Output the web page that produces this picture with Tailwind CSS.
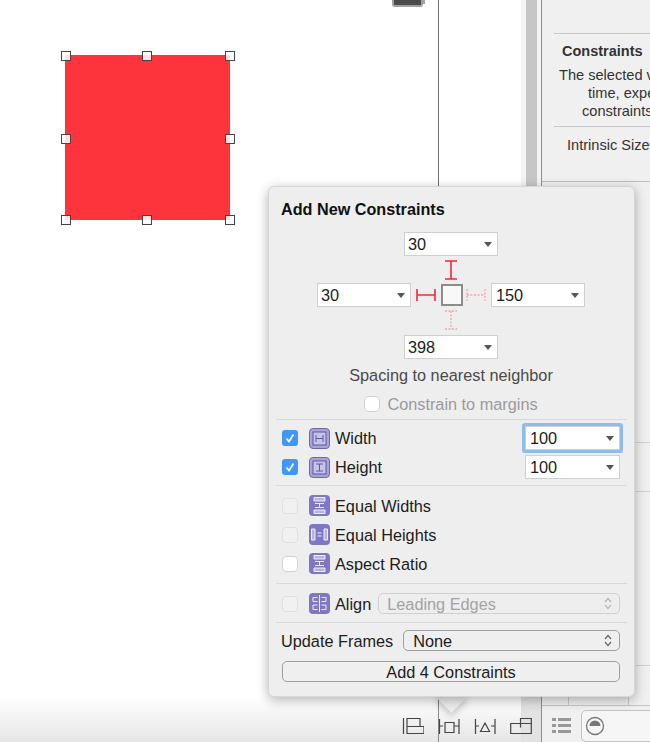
<!DOCTYPE html>
<html lang="en">
<head>
<meta charset="UTF-8">
<title>Add New Constraints</title>
<script src="https://cdn.jsdelivr.net/npm/@tailwindcss/browser@4"></script>
</head>
<body class="bg-white font-['Liberation_Sans',Arial,sans-serif] antialiased">
<div class="relative w-[650px] h-[742px] overflow-hidden bg-white">

  <!-- canvas: selected view -->
  <div class="absolute left-[65px] top-[55px] w-[165px] h-[165px] bg-[#fd343c]"></div>
  <div class="absolute left-[61px] top-[51px] w-[10px] h-[10px] bg-white/85 border-[1.5px] border-[#444]"></div>
  <div class="absolute left-[142px] top-[51px] w-[10px] h-[10px] bg-white/85 border-[1.5px] border-[#444]"></div>
  <div class="absolute left-[225px] top-[51px] w-[10px] h-[10px] bg-white/85 border-[1.5px] border-[#444]"></div>
  <div class="absolute left-[61px] top-[134px] w-[10px] h-[10px] bg-white/85 border-[1.5px] border-[#444]"></div>
  <div class="absolute left-[225px] top-[134px] w-[10px] h-[10px] bg-white/85 border-[1.5px] border-[#444]"></div>
  <div class="absolute left-[61px] top-[215px] w-[10px] h-[10px] bg-white/85 border-[1.5px] border-[#444]"></div>
  <div class="absolute left-[142px] top-[215px] w-[10px] h-[10px] bg-white/85 border-[1.5px] border-[#444]"></div>
  <div class="absolute left-[225px] top-[215px] w-[10px] h-[10px] bg-white/85 border-[1.5px] border-[#444]"></div>

  <!-- scene dock edge, battery glyph, scroller -->
  <div class="absolute left-[392px] top-0 w-[31px] h-[7px] bg-[#4a4a4a] border-2 border-t-0 border-[#a0a0a0] rounded-b-[3px]"></div>
  <div class="absolute left-[423px] top-0 w-[2px] h-[4px] bg-[#a0a0a0]"></div>
  <div class="absolute left-[438px] top-0 w-px h-[742px] bg-[#6f6f6f]"></div>
  <div class="absolute left-[521px] top-0 w-[20px] h-[742px] bg-[#f4f4f4]"></div>
  <div class="absolute left-[526px] top-0 w-[11px] h-[742px] bg-[#c6c6c6]"></div>

  <!-- inspector -->
  <div class="absolute left-[541px] top-0 w-[109px] h-[742px] bg-[#f0f0f0] border-l border-[#8e8e8e] text-[#333]">
    <div class="absolute left-[12px] top-[33px] w-[97px] h-px bg-[#c9c9c9]"></div>
    <div class="absolute left-[20px] top-[43px] text-[14.5px] leading-[17px] font-bold whitespace-nowrap">Constraints</div>
    <div class="absolute left-[17px] top-[66px] text-[14.6px] leading-[18px] whitespace-nowrap">The selected view</div>
    <div class="absolute left-[46px] top-[84px] text-[14.6px] leading-[18px] whitespace-nowrap">time, expected</div>
    <div class="absolute left-[40px] top-[102px] text-[14.6px] leading-[18px] whitespace-nowrap">constraints are</div>
    <div class="absolute left-[12px] top-[126px] w-[97px] h-px bg-[#c9c9c9]"></div>
    <div class="absolute left-[25px] top-[136px] text-[14.6px] leading-[18px] whitespace-nowrap">Intrinsic Size</div>
    <div class="absolute left-0 top-[181px] w-[109px] h-px bg-[#bdbdbd]"></div>
    <div class="absolute left-[94px] top-[442px] w-[15px] h-px bg-[#d0d0d0]"></div>
    <div class="absolute left-[94px] top-[491px] w-[15px] h-px bg-[#d0d0d0]"></div>
    <div class="absolute left-[94px] top-[665px] w-[15px] h-px bg-[#d0d0d0]"></div>
    <div class="absolute left-[26px] top-[695px] w-[61px] h-[10px] border-x border-[#c9c9c9]"></div>
    <div class="absolute left-0 top-[705px] w-[109px] h-px bg-[#c4c4c4]"></div>
  </div>

  <!-- bottom bar -->
  <div class="absolute left-0 top-[697px] w-[541px] h-[45px] bg-gradient-to-b from-[#ffffff] to-[#e6e6e6]"></div>
  <div class="absolute left-[438px] top-[697px] w-px h-[45px] bg-[#8a8a8a]"></div>
  <div class="absolute left-[521px] top-[697px] w-[20px] h-[45px] bg-[#e2e2e2]"></div>
  <div class="absolute left-[541px] top-[698px] w-px h-[44px] bg-[#8e8e8e]"></div>
  <div class="absolute left-[402px] top-[715px] flex gap-[14px] items-center">
    <svg width="22" height="20" viewBox="0 0 22 20" fill="none" stroke="#444" stroke-width="1.200"><path d="M1.500 3v16"/><path d="M5 3.500h13v8H5zM5 11.500h17v7H5z"/></svg>
    <svg width="22" height="20" viewBox="0 0 22 20" fill="none" stroke="#444" stroke-width="1.200"><path d="M1.500 4v15M1.500 11H5M7 7.500h9v10H7zM21 4v15M16 11h5"/></svg>
    <svg width="22" height="20" viewBox="0 0 22 20" fill="none" stroke="#444" stroke-width="1.200"><path d="M1.500 4v15M1.500 11H5M21 4v15M17 11h4M11 8l4.500 8.500H6.500z"/></svg>
    <svg width="22" height="20" viewBox="0 0 22 20" fill="none" stroke="#444" stroke-width="1.200"><path d="M.7 8.500h20.600v10H.7zM10.500 8.500V3.500h10.800v5M10.500 8.500v4"/></svg>
  </div>
  <svg class="absolute left-[552px] top-[717px]" width="19" height="18" viewBox="0 0 19 18" fill="#999"><path d="M0 1h4v3H0zM6 1h13v3H6zM0 7h4v3H0zM6 7h13v3H6zM0 13h4v3H0zM6 13h13v3H6z"/></svg>
  <div class="absolute left-[581px] top-[710px] w-[80px] h-[32px] bg-[#f6f6f6] border border-[#c2c2c2] rounded-[5px]"></div>
  <svg class="absolute left-[585px] top-[716px]" width="20" height="20" viewBox="0 0 20 20"><circle cx="10" cy="10" r="8.500" fill="none" stroke="#777" stroke-width="1.300"/><path d="M4.500 10a5.500 5.500 0 0 1 11 0z" fill="#777"/></svg>

  <!-- popover arrow -->
  <div class="absolute left-[440px] top-[685px] w-[23px] h-[23px] rotate-45 bg-[#eeeeee] shadow-[3px_3px_6px_rgba(0,0,0,0.18)]"></div>

  <!-- popover -->
  <div class="absolute left-[268px] top-[186px] w-[367px] h-[511px] bg-[#eeeeee] rounded-[6px] border border-[#d6d6d6] shadow-[0_3px_12px_rgba(0,0,0,0.3)] text-[#1c1c1c] text-[16.3px] leading-[18px]">
    <div class="pl-[12px] pt-[13px] font-bold text-[#111] text-[16.2px]">Add New Constraints</div>

    <!-- spacing cross -->
    <div class="mt-[14px] flex flex-col items-center pr-[1px]">
      <div class="flex w-[94px] h-[24px] items-center justify-between pl-[3px] pr-[5px] bg-white border border-[#cfcfcf]">
        <span>30</span>
        <span class="w-0 h-0 border-x-[4px] border-t-[5px] border-x-transparent border-t-[#555]"></span>
      </div>
      <svg class="mt-[4px] mb-[3px]" width="12" height="20" viewBox="0 0 12 20" fill="none" stroke="#f0283c" stroke-width="1.600"><path d="M0 1h12M6 1v18M0 19h12"/></svg>
      <div class="flex items-center">
        <div class="flex w-[94px] h-[24px] items-center justify-between pl-[3px] pr-[5px] bg-white border border-[#cfcfcf]">
          <span>30</span>
          <span class="w-0 h-0 border-x-[4px] border-t-[5px] border-x-transparent border-t-[#555]"></span>
        </div>
        <svg class="ml-[5px] mr-[5px]" width="20" height="12" viewBox="0 0 20 12" fill="none" stroke="#f0283c" stroke-width="1.600"><path d="M1 0v12M1 6h18M19 0v12"/></svg>
        <div class="w-[22px] h-[22px] bg-[#f8f8f8] border-2 border-[#8c8c8c]"></div>
        <svg class="ml-[3px] mr-[5px]" width="20" height="12" viewBox="0 0 20 12" fill="none" stroke="#f4a3ac" stroke-width="1.300" stroke-dasharray="2 1.500"><path d="M1 0v12M1 6h18M19 0v12"/></svg>
        <div class="flex w-[94px] h-[24px] items-center justify-between pl-[4px] pr-[5px] bg-white border border-[#cfcfcf]">
          <span>150</span>
          <span class="w-0 h-0 border-x-[4px] border-t-[5px] border-x-transparent border-t-[#555]"></span>
        </div>
      </div>
      <svg class="mt-[3px] mb-[5px]" width="12" height="20" viewBox="0 0 12 20" fill="none" stroke="#f4a3ac" stroke-width="1.300" stroke-dasharray="2 1.500"><path d="M0 1h12M6 1v18M0 19h12"/></svg>
      <div class="flex w-[94px] h-[24px] items-center justify-between pl-[3px] pr-[5px] bg-white border border-[#cfcfcf]">
        <span>398</span>
        <span class="w-0 h-0 border-x-[4px] border-t-[5px] border-x-transparent border-t-[#555]"></span>
      </div>
      <div class="mt-[7px] text-[#4a4a4a]">Spacing to nearest neighbor</div>
      <div class="mt-[11px] flex items-center gap-[7px] text-[#9a9a9a]">
        <span class="w-[16px] h-[16px] rounded-[4px] bg-white border border-[#d2d2d2]"></span>
        <span>Constrain to margins</span>
      </div>
    </div>

    <div class="mx-[7px] mt-[6px] h-px bg-[#d8d8d8]"></div>

    <!-- size -->
    <div class="mt-[6px] flex items-center h-[24px] pl-[13px] pr-[14px]">
      <span class="flex items-center justify-center w-[16px] h-[16px] rounded-[3px] bg-[#3f97f6]"><svg width="12" height="12" viewBox="0 0 12 12" fill="none" stroke="#fff" stroke-width="1.700"><path d="M2.500 6.500l2.500 3 4.500-7"/></svg></span>
      <svg class="ml-[11px]" width="21" height="21" viewBox="0 0 21 21"><rect x=".5" y=".5" width="20" height="20" rx="3.500" fill="#a9a2da" stroke="#6f68ac"/><rect x="4" y="4" width="13" height="13" fill="#c8c4e8" stroke="#5d56a0"/><path d="M7 7v7M14 7v7M7 10.500h7" fill="none" stroke="#5d56a0"/></svg>
      <span class="ml-[5px]">Width</span>
      <div class="ml-auto flex w-[95px] h-[24px] items-center justify-between pl-[4px] pr-[5px] bg-white border border-[#cfcfcf] shadow-[0_0_0_3px_#8fbcec] rounded-[1px]">
        <span>100</span>
        <span class="w-0 h-0 border-x-[4px] border-t-[5px] border-x-transparent border-t-[#555]"></span>
      </div>
    </div>
    <div class="mt-[5px] flex items-center h-[24px] pl-[13px] pr-[14px]">
      <span class="flex items-center justify-center w-[16px] h-[16px] rounded-[3px] bg-[#3f97f6]"><svg width="12" height="12" viewBox="0 0 12 12" fill="none" stroke="#fff" stroke-width="1.700"><path d="M2.500 6.500l2.500 3 4.500-7"/></svg></span>
      <svg class="ml-[11px]" width="21" height="21" viewBox="0 0 21 21"><rect x=".5" y=".5" width="20" height="20" rx="3.500" fill="#a9a2da" stroke="#6f68ac"/><rect x="4" y="4" width="13" height="13" fill="#c8c4e8" stroke="#5d56a0"/><path d="M7 7h7M7 14h7M10.500 7v7" fill="none" stroke="#5d56a0"/></svg>
      <span class="ml-[5px]">Height</span>
      <div class="ml-auto flex w-[95px] h-[24px] items-center justify-between pl-[4px] pr-[5px] bg-white border border-[#cfcfcf]">
        <span>100</span>
        <span class="w-0 h-0 border-x-[4px] border-t-[5px] border-x-transparent border-t-[#555]"></span>
      </div>
    </div>

    <div class="mx-[7px] mt-[6px] h-px bg-[#d8d8d8]"></div>

    <!-- equal -->
    <div class="mt-[9px] flex flex-col gap-[8px]">
      <div class="flex items-center h-[21px] pl-[13px]">
        <span class="w-[16px] h-[16px] rounded-[4px] bg-[#f1f1f1] border border-[#e0e0e0]"></span>
        <svg class="ml-[11px]" width="21" height="21" viewBox="0 0 21 21"><rect width="21" height="21" rx="4" fill="#7d77c4"/><path d="M5 2.500h11v3.500H5zM5 15h11v3.500H5z" fill="#b7b3e0" stroke="#f0effa"/><path d="M6 8.500h9M6 12.500h9M10.500 8.500v4" stroke="#f0effa"/></svg>
        <span class="ml-[5px]">Equal Widths</span>
      </div>
      <div class="flex items-center h-[21px] pl-[13px]">
        <span class="w-[16px] h-[16px] rounded-[4px] bg-[#f1f1f1] border border-[#e0e0e0]"></span>
        <svg class="ml-[11px]" width="21" height="21" viewBox="0 0 21 21"><rect width="21" height="21" rx="4" fill="#7d77c4"/><path d="M2.500 5h3.500v11H2.500zM15 5h3.500v11H15z" fill="#b7b3e0" stroke="#f0effa"/><path d="M8.500 9h4M8.500 12h4" stroke="#f0effa"/></svg>
        <span class="ml-[5px]">Equal Heights</span>
      </div>
      <div class="flex items-center h-[21px] pl-[13px]">
        <span class="w-[16px] h-[16px] rounded-[4px] bg-white border border-[#d4d4d4]"></span>
        <svg class="ml-[11px]" width="21" height="21" viewBox="0 0 21 21"><rect width="21" height="21" rx="4" fill="#7d77c4"/><path d="M5 2.500h11v3.500H5zM5 15h11v3.500H5z" fill="#b7b3e0" stroke="#f0effa"/><path d="M6 8.500h9M6 12.500h9M10.500 8.500v4" stroke="#f0effa"/></svg>
        <span class="ml-[5px]">Aspect Ratio</span>
      </div>
    </div>

    <div class="mx-[7px] mt-[9px] h-px bg-[#d8d8d8]"></div>

    <!-- align -->
    <div class="mt-[9px] flex items-center h-[21px] pl-[13px] pr-[14px]">
      <span class="w-[16px] h-[16px] rounded-[4px] bg-[#f1f1f1] border border-[#e0e0e0]"></span>
      <svg class="ml-[11px]" width="21" height="21" viewBox="0 0 21 21"><rect width="21" height="21" rx="4" fill="#7d77c4"/><path d="M10.500 2v17" stroke="#f0effa"/><path d="M8.500 4.500H4v4h4.500M8.500 12H4v4.500h4.500M12.500 4.500H17v4h-4.500M12.500 12H17v4.500h-4.500" fill="none" stroke="#f0effa"/></svg>
      <span class="ml-[5px]">Align</span>
      <div class="ml-[7px] flex-1 flex items-center justify-between h-[21px] pl-[8px] pr-[7px] rounded-[5px] border border-[#d0d0d0] text-[#a3a3a3]">
        <span>Leading Edges</span>
        <svg width="8" height="13" viewBox="0 0 8 13" fill="none" stroke="#b5b5b5" stroke-width="1.200"><path d="M1 5l3-3.500L7 5M1 8l3 3.500L7 8"/></svg>
      </div>
    </div>

    <div class="mx-[7px] mt-[8px] h-px bg-[#d8d8d8]"></div>

    <!-- update frames -->
    <div class="mt-[7px] flex items-center h-[21px] pl-[12px] pr-[14px]">
      <span class="whitespace-nowrap">Update Frames</span>
      <div class="ml-[10px] flex-1 flex items-center justify-between h-[21px] pl-[9px] pr-[7px] rounded-[5px] border border-[#9f9f9f] bg-[#efefef]">
        <span>None</span>
        <svg width="8" height="13" viewBox="0 0 8 13" fill="none" stroke="#666" stroke-width="1.200"><path d="M1 5l3-3.500L7 5M1 8l3 3.500L7 8"/></svg>
      </div>
    </div>
    <div class="mt-[10px] ml-[13px] mr-[14px] h-[21px] flex items-center justify-center rounded-[5px] border border-[#9f9f9f] bg-[#efefef]">Add 4 Constraints</div>
  </div>
</div>
</body>
</html>
